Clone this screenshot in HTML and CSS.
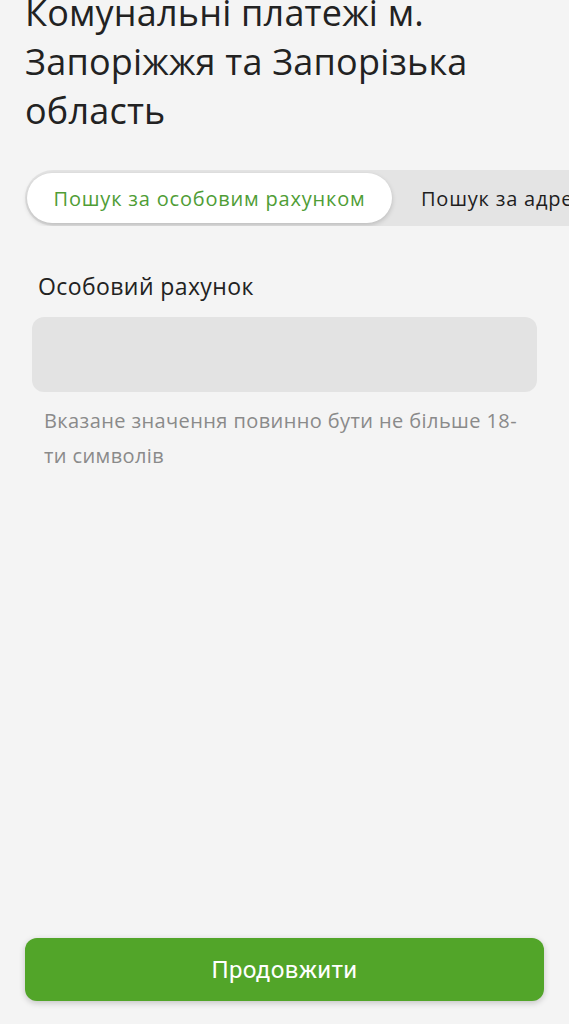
FILE: index.html
```html
<!DOCTYPE html>
<html lang="uk">
<head>
<meta charset="utf-8">
<title>Комунальні платежі</title>
<link rel="stylesheet" href="styles.css">
</head>
<body>
<div class="page">
  <h1 class="title">Комунальні платежі м. Запоріжжя та Запорізька область</h1>
  <div class="tabs-wrap">
    <div class="tabs">
      <div class="tab tab-active">Пошук за особовим рахунком</div>
      <div class="tab">Пошук за адресою</div>
    </div>
  </div>
  <div class="field">
    <label class="field-label" for="acc">Особовий рахунок</label>
    <input class="field-input" id="acc" type="text">
    <p class="field-hint">Вказане значення повинно бути не більше 18-ти символів</p>
  </div>
  <div class="spacer"></div>
  <div class="footer">
    <button class="btn" type="button">Продовжити</button>
  </div>
</div>
</body>
</html>
```
FILE: styles.css
```css
html, body {
  margin: 0;
  padding: 0;
  background: #f4f4f4;
}
body {
  width: 569px;
  height: 1024px;
  overflow: hidden;
  font-family: "Open Sans", "Noto Sans", sans-serif;
  color: #222;
}
.page {
  display: flex;
  flex-direction: column;
  height: 1024px;
}
.title {
  margin: -12px 60px 0 25px;
  font-size: 36px;
  font-weight: 400;
  line-height: 49px;
  letter-spacing: 0.2px;
  color: #222;
}
.tabs-wrap {
  margin-top: 35px;
  padding-left: 25px;
  overflow: hidden;
}
.tabs {
  display: flex;
  align-items: center;
  gap: 29px;
  height: 56px;
  padding: 0 2px;
  background: #e4e4e4;
  border-radius: 28px 0 0 28px;
  white-space: nowrap;
  width: 700px;
  box-sizing: border-box;
}
.tab {
  font-size: 20px;
  letter-spacing: 0.8px;
  color: #1e1e1e;
  flex: none;
}
.tab-active {
  width: 365px;
  height: 50px;
  box-sizing: border-box;
  display: flex;
  align-items: center;
  justify-content: center;
  background: #fff;
  border-radius: 25px;
  color: #4f9d36;
  box-shadow: 0 2px 5px rgba(0,0,0,0.18);
}
.field {
  margin: 46px 32px 0 32px;
  display: flex;
  flex-direction: column;
}
.field-label {
  padding-left: 6px;
  font-size: 23px;
  line-height: 28px;
  letter-spacing: 0.4px;
  color: #222;
}
.field-input {
  margin-top: 17px;
  height: 75px;
  border: none;
  border-radius: 12px;
  background: #e3e3e3;
  outline: none;
  box-sizing: border-box;
}
.field-hint {
  margin: 11px 10px 0 12px;
  font-size: 20px;
  line-height: 35px;
  letter-spacing: 0.4px;
  color: #8a8a8a;
}
.spacer {
  flex: 1;
}
.footer {
  padding: 0 25px 23px 25px;
}
.btn {
  display: block;
  width: 100%;
  height: 63px;
  border: none;
  border-radius: 12px;
  background: #52a529;
  color: #fff;
  font-family: Roboto, "Noto Sans", sans-serif;
  font-size: 24px;
  letter-spacing: 0.3px;
  box-shadow: 0 2px 6px rgba(0,0,0,0.2);
}
```
